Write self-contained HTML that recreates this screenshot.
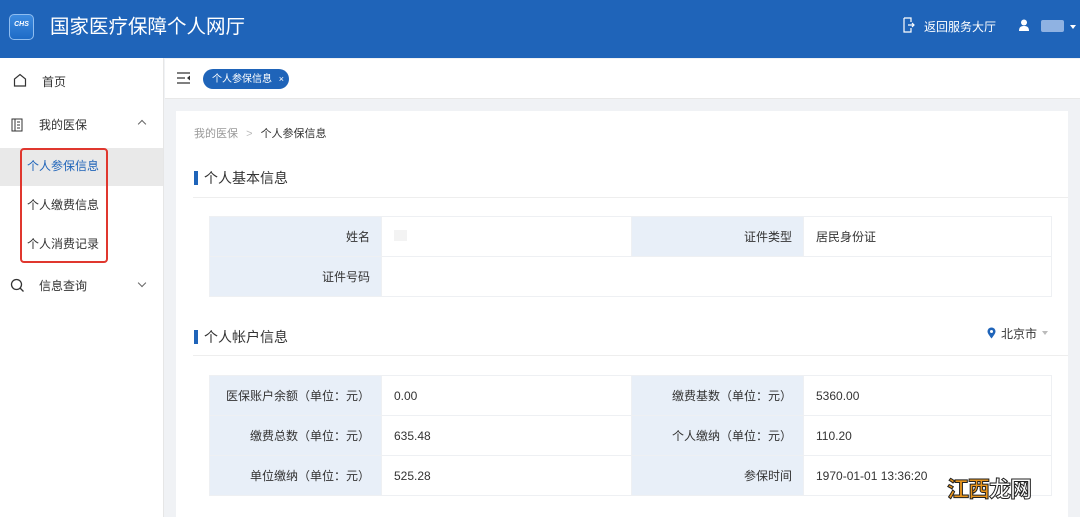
<!DOCTYPE html>
<html><head><meta charset="utf-8"><style>
*{margin:0;padding:0;box-sizing:border-box}
body{width:1080px;height:517px;overflow:hidden;background:#f0f2f5;font-family:"Liberation Sans","Noto Sans CJK SC",sans-serif;position:relative;color:#333}
.a{position:absolute}
.hdr{left:0;top:0;width:1080px;height:58px;background:#1f64b9}
.side{left:0;top:58px;width:164px;height:459px;background:#fff;border-right:1px solid #e6e6e6}
.mi{position:absolute;left:0;width:164px;font-size:12px;color:#333;line-height:20px}
table{border-collapse:collapse;position:absolute;left:209px;width:843px;font-size:12px}
td{border:1px solid #eef0f3;height:40px;padding:0 12px}
td.l{background:#e8eff8;text-align:right;padding-right:11px;width:172px}
td.v{width:250px}
.h{font-size:14px;color:#333}
.bar{display:inline-block;width:4px;height:14px;background:#1f64b9;vertical-align:-2px;margin-right:6px}
</style></head><body>
<div class="a hdr">
 <div class="a" style="left:9px;top:14px;width:25px;height:26px;border-radius:5px;background:linear-gradient(#3d8be0,#1e6bc6);border:1px solid #8fbdf0;color:#fff;font-size:7px;font-weight:bold;font-style:italic;text-align:center;line-height:20px">CHS</div>
 <div class="a" style="left:50px;top:14px;font-size:19.5px;color:#fff;line-height:26px">国家医疗保障个人网厅</div>
 <svg class="a" style="left:903px;top:17px" width="12" height="16" viewBox="0 0 12 16"><path d="M1 1h7v4M1 1v14h7v-4M5 8h6M9 6l2 2-2 2" fill="none" stroke="#fff" stroke-width="1.2"/></svg>
 <div class="a" style="left:924px;top:18px;font-size:12px;color:#fff">返回服务大厅</div>
 <svg class="a" style="left:1018px;top:19px" width="12" height="13" viewBox="0 0 12 13"><circle cx="6" cy="3.5" r="3" fill="#fff"/><path d="M1 12c0-4 2-5 5-5s5 1 5 5z" fill="#fff"/></svg>
 <div class="a" style="left:1041px;top:20px;width:23px;height:12px;background:#8fb2e2;border-radius:2px"></div>
 <div class="a" style="left:1070px;top:25px;border:3.5px solid transparent;border-top:4px solid #fff"></div>
</div>
<div class="a side">
 <svg class="a" style="left:13px;top:15px" width="14" height="14" viewBox="0 0 14 14"><path d="M1.5 13V6L7 1.5 12.5 6V13z" fill="none" stroke="#333" stroke-width="1.2"/></svg>
 <div class="mi" style="top:14px;left:42px">首页</div>
 <svg class="a" style="left:11px;top:60px" width="12" height="14" viewBox="0 0 12 14"><rect x="1" y="1" width="10" height="12" fill="none" stroke="#333"/><path d="M4 1v12M6 4h3M6 7h3M6 10h3" stroke="#333"/></svg>
 <div class="mi" style="top:57px;left:39px">我的医保</div>
 <div class="a" style="left:139px;top:63px;width:6px;height:6px;border-left:1px solid #666;border-top:1px solid #666;transform:rotate(45deg)"></div>
 <div class="a" style="left:0;top:90px;width:163px;height:38px;background:#e9e9e9"></div>
 <div class="mi" style="top:98px;left:27px;color:#1f64b9">个人参保信息</div>
 <div class="mi" style="top:137px;left:27px">个人缴费信息</div>
 <div class="mi" style="top:176px;left:27px">个人消费记录</div>
 <div class="a" style="left:20px;top:90px;width:88px;height:115px;border:2px solid #e0372e;border-radius:4px"></div>
 <svg class="a" style="left:10px;top:220px" width="15" height="15" viewBox="0 0 15 15"><circle cx="6.5" cy="6.5" r="5" fill="none" stroke="#333" stroke-width="1.3"/><path d="M10 10l3.5 3.5" stroke="#333" stroke-width="1.3"/></svg>
 <div class="mi" style="top:218px;left:39px">信息查询</div>
 <div class="a" style="left:139px;top:222px;width:6px;height:6px;border-right:1px solid #666;border-bottom:1px solid #666;transform:rotate(45deg)"></div>
</div>
<div class="a" style="left:165px;top:59px;width:915px;height:40px;background:#fff;border-bottom:1px solid #e8e8e8"></div>
<svg class="a" style="left:177px;top:72px" width="13" height="12" viewBox="0 0 13 12"><path d="M0 1h13M0 6h8M0 11h13" stroke="#333" stroke-width="1.3"/><path d="M13 3.5L10 6l3 2.5z" fill="#333"/></svg>
<div class="a" style="left:203px;top:69px;width:86px;height:20px;border-radius:10px;background:#1f64b9;color:#fff;font-size:10px;line-height:20px;padding-left:9px">个人参保信息 <span style="margin-left:4px;font-size:9px">×</span></div>
<div class="a" style="left:176px;top:111px;width:892px;height:406px;background:#fff"></div>
<div class="a" style="left:194px;top:125px;font-size:11px;color:#999">我的医保 <span style="color:#bbb;margin:0 5px">&gt;</span> <span style="color:#333">个人参保信息</span></div>
<div class="a h" style="left:194px;top:168px"><span class="bar"></span>个人基本信息</div>
<div class="a" style="left:193px;top:197px;width:875px;height:1px;background:#eee"></div>
<table style="top:216px">
<tr><td class="l">姓名</td><td class="v"><span style="display:inline-block;width:13px;height:11px;background:#f3f3f3"></span></td><td class="l">证件类型</td><td>居民身份证</td></tr>
<tr><td class="l">证件号码</td><td colspan="3"></td></tr>
</table>
<div class="a h" style="left:194px;top:327px"><span class="bar"></span>个人帐户信息</div>
<svg class="a" style="left:987px;top:327px" width="9" height="12" viewBox="0 0 9 12"><path d="M4.5 11.5C1 7 .5 5.5.5 4.5a4 4 0 018 0c0 1-.5 2.5-4 7z" fill="#1f64b9"/><circle cx="4.5" cy="4.5" r="1.5" fill="#fff"/></svg>
<div class="a" style="left:1001px;top:325px;font-size:12px;color:#333">北京市</div>
<div class="a" style="left:1042px;top:331px;border:3px solid transparent;border-top:4px solid #bbb"></div>
<div class="a" style="left:193px;top:355px;width:875px;height:1px;background:#eee"></div>
<table style="top:375px">
<tr><td class="l">医保账户余额（单位：元）</td><td class="v">0.00</td><td class="l">缴费基数（单位：元）</td><td>5360.00</td></tr>
<tr><td class="l">缴费总数（单位：元）</td><td class="v">635.48</td><td class="l">个人缴纳（单位：元）</td><td>110.20</td></tr>
<tr><td class="l">单位缴纳（单位：元）</td><td class="v">525.28</td><td class="l">参保时间</td><td>1970-01-01 13:36:20</td></tr>
</table>
<div class="a" style="left:947px;top:472px;font-size:22px;font-weight:bold;letter-spacing:-1px;-webkit-text-stroke:1px #222"><span style="color:#e8951d">江西</span><span style="color:#fff">龙网</span></div>
</body></html>
